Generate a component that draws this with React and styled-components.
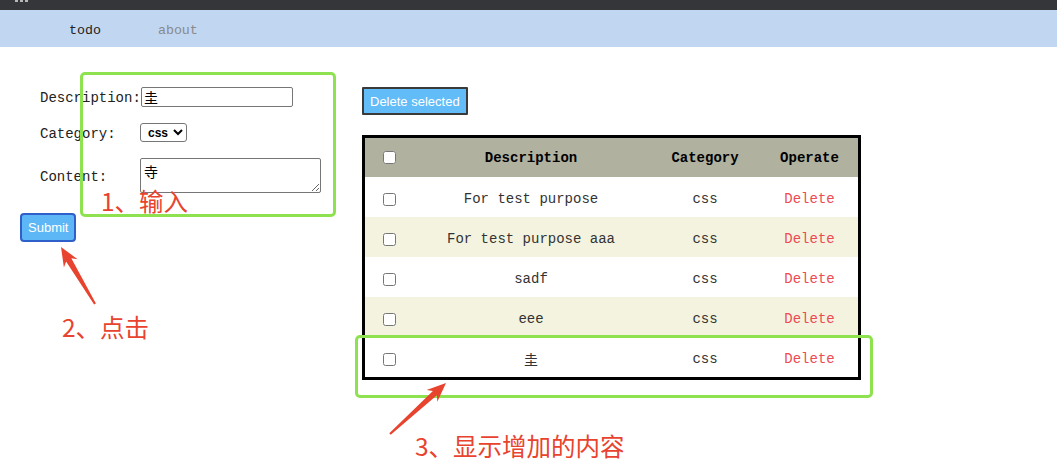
import React from 'react';
import styled, {createGlobalStyle} from 'styled-components';

const GlobalStyle = createGlobalStyle`
    body {
        margin: 0;
        background: #fff;
        font-family: "Liberation Mono", "Noto Sans CJK SC", monospace;
    }
`;

const Page = styled.div`
    position: relative;
    width: 1057px;
    height: 461px;
`;

const TopStrip = styled.div`
    height: 10px;
    background: #35363a;
    display: flex;
    gap: 2px;
    padding-left: 15px;
`;

const Dot = styled.span`
    width: 3px;
    height: 2px;
    background: #b8b8b8;
`;

const Nav = styled.nav`
    box-sizing: border-box;
    height: 37px;
    padding: 3px 0 0 69px;
    background: #c1d6f1;
    display: flex;
    align-items: center;
    gap: 57px;
    font-size: 13.3px;
`;

const NavLink = styled.a`
    color: ${props => props.active ? '#222' : '#8a8a8a'};
    text-decoration: none;
`;

const Main = styled.main`
    display: flex;
    padding: 40px 0 0 20px;
`;

const FormColumn = styled.div`
    width: 342px;
    flex-shrink: 0;
`;

const Fields = styled.div`
    padding-left: 20px;
    display: flex;
    flex-direction: column;
    gap: 16px;
`;

const Row = styled.div`
    display: flex;
    align-items: center;
`;

const Label = styled.label`
    width: 100px;
    padding-top: 2px;
    font-size: 14px;
    color: #222;
`;

const TextInput = styled.input`
    box-sizing: border-box;
    width: 152px;
    height: 20px;
    margin: 0 0 0 1px;
    padding: 1px 2px;
    border: 1px solid #767676;
    border-radius: 2px;
    font: 14px "Liberation Sans", "Noto Sans CJK SC", sans-serif;
`;

const Select = styled.select`
    box-sizing: border-box;
    width: 47px;
    height: 19px;
    margin: 0;
    border: 1px solid #767676;
    border-radius: 3px;
    background: #fff;
    font: bold 12px "Liberation Sans", sans-serif;
    padding: 0 0 0 3px;
`;

const TextArea = styled.textarea`
    box-sizing: border-box;
    width: 181px;
    height: 35px;
    margin: 0;
    padding: 2px 3px;
    border: 1px solid #767676;
    border-radius: 2px;
    font: 14px "Liberation Sans", "Noto Sans CJK SC", sans-serif;
`;

const BlueButton = styled.button`
    box-sizing: border-box;
    height: ${props => props.h}px;
    padding: 0 ${props => props.px}px;
    background: ${props => props.bg};
    border: 2px solid ${props => props.edge};
    border-radius: ${props => props.radius}px;
    color: #fff;
    font: 13px "Liberation Sans", sans-serif;
`;

const SubmitRow = styled.div`
    margin-top: 20px;
`;

const ListColumn = styled.div`
    display: flex;
    flex-direction: column;
    align-items: flex-start;
    gap: 20px;
`;

const Table = styled.table`
    width: 499px;
    table-layout: fixed;
    border: 3px solid #000;
    border-spacing: 0;
    font-size: 14px;
`;

const HeadCell = styled.th`
    height: 39px;
    padding: 0;
    background: #b0b19f;
    color: #000;
    font-weight: bold;
    text-align: center;
`;

const BodyRow = styled.tr`
    background: ${props => props.striped ? '#f4f3e0' : '#fff'};
`;

const Cell = styled.td`
    height: 36px;
    padding: 4px 0 0;
    text-align: center;
    color: ${props => props.danger ? '#ee4a52' : '#333'};
`;

const Check = styled.input`
    width: 13px;
    height: 13px;
    margin: 0;
    vertical-align: middle;
`;

// annotation layer drawn on top of the screenshot
const Marker = styled.div`
    position: absolute;
    left: ${props => props.x}px;
    top: ${props => props.y}px;
    width: ${props => props.w}px;
    height: ${props => props.h}px;
    box-sizing: border-box;
    border: 3px solid #8fe24f;
    border-radius: 5px;
    pointer-events: none;
`;

const Note = styled.div`
    position: absolute;
    left: ${props => props.x}px;
    top: ${props => props.y}px;
    font: 24.5px/24px "Noto Sans CJK SC", sans-serif;
    color: #e8432e;
    white-space: nowrap;
`;

const Overlay = styled.svg`
    position: absolute;
    left: 0;
    top: 0;
    pointer-events: none;
`;

const todos = [
    {description: 'For test purpose', category: 'css'},
    {description: 'For test purpose aaa', category: 'css'},
    {description: 'sadf', category: 'css'},
    {description: 'eee', category: 'css'},
    {description: '圭', category: 'css'},
];

function arrowPoints([x1, y1], [x2, y2]) {
    const len = Math.hypot(x2 - x1, y2 - y1);
    const ux = (x2 - x1) / len, uy = (y2 - y1) / len;
    const nx = -uy, ny = ux;
    const bx = x2 - ux * 19, by = y2 - uy * 19;
    const nbx = x2 - ux * 15, nby = y2 - uy * 15;
    const p = (x, y) => `${x.toFixed(1)},${y.toFixed(1)}`;
    return [
        p(x1 + nx * 1, y1 + ny * 1),
        p(nbx + nx * 3, nby + ny * 3),
        p(bx + nx * 8, by + ny * 8),
        p(x2, y2),
        p(bx - nx * 8, by - ny * 8),
        p(nbx - nx * 3, nby - ny * 3),
        p(x1 - nx * 1, y1 - ny * 1),
    ].join(' ');
}

export default function App() {
    return (
        <Page>
            <GlobalStyle/>
            <TopStrip><Dot/><Dot/><Dot/></TopStrip>
            <Nav>
                <NavLink active>todo</NavLink>
                <NavLink>about</NavLink>
            </Nav>
            <Main>
                <FormColumn>
                    <Fields>
                        <Row>
                            <Label>Description:</Label>
                            <TextInput defaultValue="圭"/>
                        </Row>
                        <Row>
                            <Label>Category:</Label>
                            <Select defaultValue="css">
                                <option value="css">css</option>
                                <option value="js">js</option>
                            </Select>
                        </Row>
                        <Row>
                            <Label>Content:</Label>
                            <TextArea defaultValue="寺"/>
                        </Row>
                    </Fields>
                    <SubmitRow>
                        <BlueButton h={29} px={6} bg="#5db7f6" edge="#2f5fc8" radius={4}>Submit</BlueButton>
                    </SubmitRow>
                </FormColumn>
                <ListColumn>
                    <BlueButton h={28} px={6} bg="#62bcf8" edge="#3a3a3a" radius={1}>Delete selected</BlueButton>
                    <Table>
                        <colgroup>
                            <col style={{width: 48}}/>
                            <col style={{width: 236}}/>
                            <col style={{width: 112}}/>
                            <col style={{width: 97}}/>
                        </colgroup>
                        <thead>
                            <tr>
                                <HeadCell><Check type="checkbox"/></HeadCell>
                                <HeadCell>Description</HeadCell>
                                <HeadCell>Category</HeadCell>
                                <HeadCell>Operate</HeadCell>
                            </tr>
                        </thead>
                        <tbody>
                            {todos.map((todo, i) => (
                                <BodyRow key={i} striped={i % 2 === 1}>
                                    <Cell><Check type="checkbox"/></Cell>
                                    <Cell>{todo.description}</Cell>
                                    <Cell>{todo.category}</Cell>
                                    <Cell danger>Delete</Cell>
                                </BodyRow>
                            ))}
                        </tbody>
                    </Table>
                </ListColumn>
            </Main>

            <Marker x={80} y={72} w={256} h={145}/>
            <Marker x={355} y={335} w={518} h={63}/>
            <Overlay width="1057" height="461">
                <polygon points={arrowPoints([95, 304], [61, 247])} fill="#e8432e"/>
                <polygon points={arrowPoints([390, 434], [446, 383])} fill="#e8432e"/>
            </Overlay>
            <Note x={101} y={189}>1、输入</Note>
            <Note x={62} y={315}>2、点击</Note>
            <Note x={415} y={434}>3、显示增加的内容</Note>
        </Page>
    );
}
